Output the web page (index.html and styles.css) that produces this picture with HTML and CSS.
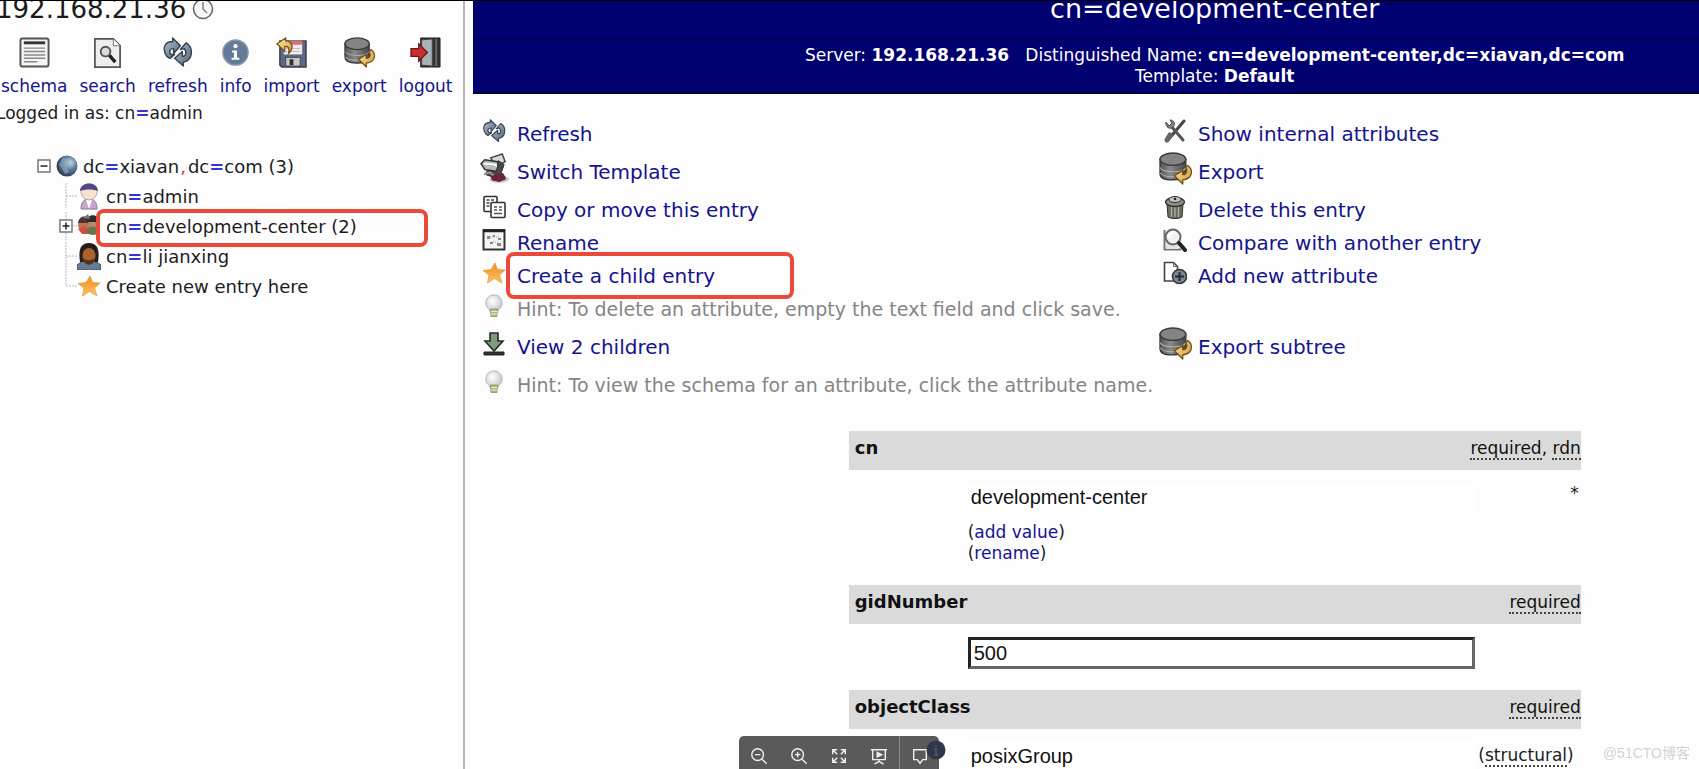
FILE: index.html
```html
<!DOCTYPE html>
<html lang="en">
<head>
<meta charset="utf-8">
<title>phpLDAPadmin</title>
<link rel="stylesheet" href="styles.css">
</head>
<body>
<svg class="defs" aria-hidden="true">
  <defs>
    <linearGradient id="steel" x1="0" y1="0" x2="1" y2="1"><stop offset="0" stop-color="#b4c1cd"/><stop offset="1" stop-color="#526478"/></linearGradient>
    <linearGradient id="drum" x1="0" x2="1"><stop offset="0" stop-color="#555"/><stop offset=".4" stop-color="#8a8a8a"/><stop offset="1" stop-color="#484848"/></linearGradient>
    <linearGradient id="gold" x1="0" y1="0" x2="1" y2="1"><stop offset="0" stop-color="#fff0a8"/><stop offset="1" stop-color="#c89430"/></linearGradient>
    <linearGradient id="sun" x1="0" y1="0" x2="0" y2="1"><stop offset="0" stop-color="#f08c20"/><stop offset="1" stop-color="#ffc45e"/></linearGradient>
    <radialGradient id="ball" cx=".65" cy=".35" r=".8"><stop offset="0" stop-color="#c8dcec"/><stop offset=".4" stop-color="#5f7c9c"/><stop offset="1" stop-color="#1b2638"/></radialGradient>
    <radialGradient id="glass" cx=".4" cy=".35" r=".7"><stop offset="0" stop-color="#fff"/><stop offset="1" stop-color="#c2c2cc"/></radialGradient>
    <symbol id="i-refresh" viewBox="0 0 32 32">
      <path d="M5 20C-1 11 4 4 11 5V1l8 8-7 8v-5c-4 0-5 3-3 6h4l-5 4z" fill="url(#steel)" stroke="#344252" stroke-width="1.500" stroke-linejoin="round"/>
      <path d="M25 6c8 5 7 18-3 20v4l-9-8 8-7v5c4 0 5-5 2-8l-4 1z" fill="url(#steel)" stroke="#344252" stroke-width="1.500" stroke-linejoin="round"/>
    </symbol>
    <symbol id="i-export" viewBox="0 0 32 32">
      <path d="M1 7v14c0 4 5 6 12 6s13-2 13-6V7z" fill="url(#drum)" stroke="#333" stroke-width="1.300"/>
      <ellipse cx="13.500" cy="7" rx="12.500" ry="6" fill="#848484" stroke="#3b3b3b" stroke-width="1.300"/>
      <path d="M1 15c2 5 23 6 25 0M1 20c2 4 13 5 17 3" fill="none" stroke="#b0b0b0"/>
      <path d="M28 13c6 5 4 13-5 14v4l-8-8 8-5v4c4 0 5-4 3-7z" fill="url(#gold)" stroke="#765018" stroke-width="1.300" stroke-linejoin="round"/>
    </symbol>
    <symbol id="i-star" viewBox="0 0 24 24">
      <path d="M13 2l2.500 6.500 7.500.5-5.500 5 2.500 8-7.500-4.500L5.500 22l1.500-8L1 9.500l8-1z" fill="url(#sun)" stroke="#df9f48" stroke-width=".8"/>
    </symbol>
    <symbol id="i-bulb" viewBox="0 0 24 24">
      <path d="M12 1a8 8 0 0 0-5 14.300L8.500 18h7l1.500-2.700A8 8 0 0 0 12 1z" fill="url(#glass)" stroke="#b4b4b9"/>
      <path d="M8.500 15h7l-.5 7.500H9z" fill="#b5ba82" stroke="#888c66" stroke-width=".8"/>
      <path d="M9 17.500h6.500M9 20h6.500" stroke="#e9ecc8"/>
    </symbol>
  </defs>
</svg>

<div class="page">
  <aside class="sidebar">
    <div class="server">
      <h1 class="server-name">192.168.21.36</h1>
      <svg class="clock" viewBox="0 0 22 22"><circle cx="11" cy="11" r="9.500" fill="#f7f7f7" stroke="#6a6a6a" stroke-width="1.600"/><path d="M11 4v7l4 4" fill="none" stroke="#777" stroke-width="1.400"/></svg>
    </div>
    <nav class="tools">
      <a class="tool" href="#"><svg class="icon-lg" viewBox="0 0 32 32"><rect x="1.500" y="1.500" width="29" height="29" rx="2" fill="#f4f4f4" stroke="#555" stroke-width="2"/><path d="M5 6h22" stroke="#33333d" stroke-width="3"/><path d="M5 11.500h22M5 15h22M5 18.500h22M5 22h22M5 25.500h14" stroke="#888" stroke-width="1.500"/></svg>schema</a>
      <a class="tool" href="#"><svg class="icon-lg" viewBox="0 0 32 32"><path d="M3 2h19l7 7v22H3z" fill="#eee" stroke="#555" stroke-width="1.800"/><path d="M22 2v7h7" fill="#fff" stroke="#777"/><circle cx="14" cy="15" r="5" fill="#d4dce2" stroke="#555" stroke-width="2"/><path d="M18 19l6 7" stroke="#222" stroke-width="3.500"/></svg>search</a>
      <a class="tool" href="#"><svg class="icon-lg"><use href="#i-refresh"/></svg>refresh</a>
      <a class="tool" href="#"><svg class="icon-lg" viewBox="0 0 32 32"><circle cx="16" cy="16" r="13" fill="#647b98" stroke="#8a98ab" stroke-width="1.500"/><circle cx="16" cy="9.500" r="2.200" fill="#fff"/><path d="M12.500 14h5v7.500h2.500v2h-8v-2h2.500V16h-2z" fill="#fff"/></svg>info</a>
      <a class="tool" href="#"><svg class="icon-lg" viewBox="0 0 32 32"><path d="M4 4h27v27H6l-2-2z" fill="#5d6787" stroke="#3a3d4c" stroke-width="1.500"/><path d="M8 4h19v14H8z" fill="#f3efef"/><path d="M8 4h19v4H8z" fill="#d67272"/><path d="M10 12h15M10 15h15" stroke="#bbb"/><path d="M10 21h15v9H10z" fill="#c5c7cb" stroke="#444"/><path d="M14 23h4v6h-4z" fill="#333"/><path d="M10 1L1 7l8 8v-5c4-1 5 2 4 7 6-5 4-13-3-13z" fill="url(#gold)" stroke="#74501e" stroke-width="1.300"/></svg>import</a>
      <a class="tool" href="#"><svg class="icon-lg"><use href="#i-export"/></svg>export</a>
      <a class="tool" href="#"><svg class="icon-lg" viewBox="0 0 32 32"><path d="M11 1h20v30H11z" fill="#343434" stroke="#222"/><path d="M12 3l11-1v28l-11-1z" fill="#a8b3b5" stroke="#444"/><path d="M27 2v28" stroke="#666" stroke-width="2"/><path d="M1 12h8V7l9 9-9 9v-5H1z" fill="#c93030" stroke="#701515" stroke-width="1.300"/></svg>logout</a>
    </nav>
    <p class="login">Logged in as: cn<b class="eq">=</b>admin</p>

    <ul class="tree">
      <li class="node root">
        <svg class="toggle" viewBox="0 0 14 14"><path d="M1 1h12v12H1z" fill="#fff" stroke="#777" stroke-width="1.500"/><path d="M3.500 7h7" stroke="#222" stroke-width="1.500"/></svg>
        <svg class="icon-md" viewBox="0 0 24 24"><circle cx="12" cy="12" r="10.500" fill="url(#ball)"/><path d="M8 4l6 1 2 4-4 4 2 5-4 2-4-7-2-2z" fill="#9fb3c6" opacity=".55"/></svg>
        <a class="label" href="#">dc<b class="eq">=</b>xiavan<span class="comma">,</span>dc<b class="eq">=</b>com (3)</a>
      </li>
      <li class="node child">
        <svg class="branch" viewBox="0 0 18 30"><path d="M7 2v25M7 15h11" fill="none" stroke="#b9b4c8" stroke-dasharray="2 1"/></svg>
        <svg class="icon-person" viewBox="0 0 24 28"><path d="M4 27c0-7 3-10 8-10s8 3 8 10z" fill="#c9a6cf" stroke="#87758f"/><path d="M9 18l3 9 3-9z" fill="#fff"/><circle cx="12" cy="10" r="8" fill="#f7e0d0" stroke="#b79b97" stroke-width=".8"/><path d="M3 9c0-10 18-10 18 0-5-2-12-2-18 0z" fill="#514882"/></svg>
        <a class="label" href="#">cn<b class="eq">=</b>admin</a>
      </li>
      <li class="node child">
        <svg class="branch" viewBox="0 0 18 30"><path d="M7 1v28M14 15h4" fill="none" stroke="#b9b4c8" stroke-dasharray="2 1"/><path d="M1 9h12v12H1z" fill="#fff" stroke="#777" stroke-width="1.500"/><path d="M3.500 15h7M7 11.500v7" stroke="#222" stroke-width="1.500"/></svg>
        <svg class="icon-person" viewBox="0 0 24 28"><circle cx="7" cy="13" r="6" fill="#c0705a"/><path d="M1 11c1-8 10-9 12 0z" fill="#4d342e"/><circle cx="17" cy="12" r="6" fill="#b48868"/><path d="M10 10C9 1 22 1 23 10z" fill="#2e2a28"/><path d="M1 17l7-3 6 8H5z" fill="#d64b40"/><path d="M9 20c0-7 13-7 14 0-4 4-10 4-14 0z" fill="#6d744c"/><path d="M6 6l5-4 2 5z" fill="#777"/></svg>
        <a class="label" href="#">cn<b class="eq">=</b>development-center (2)<span class="marker"></span></a>
      </li>
      <li class="node child">
        <svg class="branch" viewBox="0 0 18 30"><path d="M7 1v28M7 15h11" fill="none" stroke="#b9b4c8" stroke-dasharray="2 1"/></svg>
        <svg class="icon-person" viewBox="0 0 24 28"><path d="M0 28v-5l6-4h12l6 4v5z" fill="#667c96" stroke="#3e4b5c"/><path d="M3 20C1 7 4 1 12 1s11 6 9 19z" fill="#261d1a"/><ellipse cx="12" cy="14" rx="6.500" ry="8" fill="#a9632f"/><path d="M6 16c4 3 8 3 12 0 0 9-12 9-12 0z" fill="#57321d"/></svg>
        <a class="label" href="#">cn<b class="eq">=</b>li jianxing</a>
      </li>
      <li class="node child">
        <svg class="branch" viewBox="0 0 18 30"><path d="M7 0v15h11" fill="none" stroke="#b9b4c8" stroke-dasharray="2 1"/></svg>
        <svg class="icon-md"><use href="#i-star"/></svg>
        <a class="label" href="#">Create new entry here</a>
      </li>
    </ul>
  </aside>

  <main class="main">
    <div class="content">
      <header class="head">
        <h2 class="title">cn=development-center</h2>
        <div class="subtitle">
          <p>Server: <b>192.168.21.36</b> &nbsp; Distinguished Name: <b>cn=development-center,dc=xiavan,dc=com</b></p>
          <p>Template: <b>Default</b></p>
        </div>
      </header>

      <div class="actions">
        <div class="row tall">
          <div class="action"><span class="slot"><svg class="icon-md"><use href="#i-refresh"/></svg></span><a href="#">Refresh</a></div>
          <div class="action"><span class="slot"><svg class="icon-md" viewBox="0 0 24 24"><path d="M21 2L5 21" stroke="#444" stroke-width="3" stroke-linecap="round"/><path d="M4 21l3-5" stroke="#666" stroke-width="5" stroke-linecap="round"/><path d="M8 7l12 14" stroke="#555" stroke-width="3" stroke-linecap="round"/><path d="M3 3l3 4 3-3-2-3c4 0 6 4 3 7S2 8 3 3z" fill="#888" stroke="#444"/></svg></span><a href="#">Show internal attributes</a></div>
        </div>
        <div class="row tall">
          <div class="action"><span class="slot"><svg class="icon-lg" viewBox="0 0 32 32"><ellipse cx="21" cy="27" rx="10" ry="4" fill="#ccc"/><path d="M12 5l12-4 3 8-9 5z" fill="#d9d9d5" stroke="#444" stroke-width="1.500"/><path d="M2 11l4-4 13 2 3 6-4 4-12-2z" fill="#b9b9b6" stroke="#333" stroke-width="1.500"/><path d="M5 11l12 1 2 3" fill="none" stroke="#fff" stroke-width="2"/><path d="M20 8l6 4-3 8 4 5-9 1-12-4 3-4 9 1z" fill="#494949" stroke="#2c2c2c"/><path d="M12 23l13-2 3 6-7 3-8-2z" fill="#6d2437"/><path d="M5 22l6-2 4 3" fill="none" stroke="#999" stroke-width="2"/></svg></span><a href="#">Switch Template</a></div>
          <div class="action"><span class="slot"><svg class="icon-xl"><use href="#i-export"/></svg></span><a href="#">Export</a></div>
        </div>
        <div class="row">
          <div class="action"><span class="slot"><svg class="icon-md" viewBox="0 0 24 24"><rect x="2" y="1.500" width="13" height="15" rx="1" fill="#fff" stroke="#333" stroke-width="1.600"/><path d="M4.500 5h3M9 5h3M4.500 8h3M4.500 11h3" stroke="#444" stroke-width="1.500"/><rect x="9" y="7.500" width="14" height="15" rx="1" fill="#fff" stroke="#333" stroke-width="1.600"/><path d="M12 12h3M17 12h3M12 15h3M17 15h3M12 18.500h8" stroke="#555" stroke-width="1.500"/></svg></span><a href="#">Copy or move this entry</a></div>
          <div class="action"><span class="slot"><svg class="icon-md" viewBox="0 0 24 24"><path d="M4 9h16l-1 13c-3 2-11 2-14 0z" fill="#6a6a61" stroke="#33332e"/><path d="M8.500 11v11M12 11v11M15.500 11v11" stroke="#b4b4a6" stroke-width="1.200"/><ellipse cx="12" cy="7" rx="9.500" ry="4.500" fill="#8e8e85" stroke="#2c2c28" stroke-width="1.300"/><ellipse cx="12" cy="4.500" rx="6" ry="3" fill="#c6c6bc" stroke="#2c2c28"/><circle cx="12" cy="4" r="1.300" fill="#222"/></svg></span><a href="#">Delete this entry</a></div>
        </div>
        <div class="row">
          <div class="action"><span class="slot"><svg class="icon-md" viewBox="0 0 24 24"><rect x="1.500" y="2" width="21" height="19.500" fill="#f5f5f5" stroke="#333" stroke-width="2"/><path d="M1 3h22" stroke="#222" stroke-width="2.500"/><path d="M5 8h3v3H5zM11 7h2v2h-2zM16 10h3v2h-3zM8 14h3v2H8zM15 15h4v3h-4z" fill="#888"/><path d="M8 9h9M11 14h6" stroke="#999" stroke-dasharray="1 1"/></svg></span><a href="#">Rename</a></div>
          <div class="action"><span class="slot"><svg class="icon-md" viewBox="0 0 24 24"><path d="M1.500 2v19.500h17" fill="none" stroke="#777" stroke-width="2"/><path d="M3 12h12v9H3z" fill="#e4e4e4"/><circle cx="10" cy="9" r="7.500" fill="#eef2f2" stroke="#666" stroke-width="2"/><path d="M6 9c0-3 2-4 4-4" fill="none" stroke="#fff" stroke-width="2"/><path d="M16 15l6 7" stroke="#222" stroke-width="4" stroke-linecap="round"/></svg></span><a href="#">Compare with another entry</a></div>
        </div>
        <div class="row">
          <div class="action"><span class="slot"><svg class="icon-md"><use href="#i-star"/></svg></span><a class="marked" href="#">Create a child entry<span class="marker"></span></a></div>
          <div class="action"><span class="slot"><svg class="icon-md" viewBox="0 0 24 24"><path d="M1.500 1.500h9l4 4V20h-13z" fill="#fff" stroke="#444" stroke-width="1.600"/><path d="M10.500 1.500v4h4" fill="none" stroke="#666"/><circle cx="16.500" cy="15.500" r="7" fill="#81868e" stroke="#33363c" stroke-width="1.600"/><path d="M16.500 11v9M12 15.500h9" stroke="#202838" stroke-width="2"/></svg></span><a href="#">Add new attribute</a></div>
        </div>
        <div class="row tall">
          <div class="action hint"><span class="slot"><svg class="icon-md"><use href="#i-bulb"/></svg></span><span>Hint: To delete an attribute, empty the text field and click save.</span></div>
        </div>
        <div class="row tall">
          <div class="action"><span class="slot"><svg class="icon-md" viewBox="0 0 24 24"><path d="M8 1h8v8h5l-9 10-9-10h5z" fill="#7f9a7d" stroke="#252f25" stroke-width="1.600"/><path d="M2 20h20v3H2z" fill="#2b332b" stroke="#222"/></svg></span><a href="#">View 2 children</a></div>
          <div class="action"><span class="slot"><svg class="icon-xl"><use href="#i-export"/></svg></span><a href="#">Export subtree</a></div>
        </div>
        <div class="row">
          <div class="action hint"><span class="slot"><svg class="icon-md"><use href="#i-bulb"/></svg></span><span>Hint: To view the schema for an attribute, click the attribute name.</span></div>
        </div>
      </div>

      <form class="entry">
        <div class="bar"><label for="cn">cn</label><span class="notes"><abbr>required</abbr>, <abbr>rdn</abbr></span></div>
        <div class="field">
          <div class="value">
            <input class="text plain" id="cn" type="text" value="development-center" readonly>
            <div class="links">(<a href="#">add value</a>)<br>(<a href="#">rename</a>)</div>
          </div>
          <span class="side">*</span>
        </div>
        <div class="bar"><label for="gid">gidNumber</label><span class="notes"><abbr>required</abbr></span></div>
        <div class="field">
          <div class="value"><input class="text boxed" id="gid" type="text" value="500"></div>
        </div>
        <div class="bar"><label for="oc">objectClass</label><span class="notes"><abbr>required</abbr></span></div>
        <div class="field">
          <div class="value"><input class="text plain" id="oc" type="text" value="posixGroup" readonly></div>
          <span class="side kind">(<abbr>structural</abbr>)</span>
        </div>
      </form>
    </div>
  </main>
</div>

<div class="viewer">
  <button class="vbtn" type="button" aria-label="Zoom out"><svg class="vicon" viewBox="0 0 20 20"><circle cx="8.500" cy="8.500" r="6.500"/><path d="M13.500 13.500l5 5M5.500 8.500h6"/></svg></button>
  <button class="vbtn" type="button" aria-label="Zoom in"><svg class="vicon" viewBox="0 0 20 20"><circle cx="8.500" cy="8.500" r="6.500"/><path d="M13.500 13.500l5 5M5.500 8.500h6M8.500 5.500v6"/></svg></button>
  <button class="vbtn" type="button" aria-label="Full screen"><svg class="vicon" viewBox="0 0 20 20"><path d="M3 8V3h5M12 3h5v5M17 12v5h-5M8 17H3v-5M3 3l5 5M17 3l-5 5M17 17l-5-5M3 17l5-5"/></svg></button>
  <button class="vbtn" type="button" aria-label="Present"><svg class="vicon" viewBox="0 0 20 20"><path d="M1 3h18M3 3v11h14V3M10 14v2M5 19l5-3 5 3"/><path d="M8 6l5 2.500L8 11z" fill="#eee"/></svg></button>
  <button class="vbtn last" type="button" aria-label="Comment"><svg class="vicon" viewBox="0 0 20 20"><path d="M3 3h14v11h-4l-3 4-3-4H3z"/></svg><svg class="badge" viewBox="0 0 20 20"><circle cx="10" cy="10" r="9.500" fill="#2f374a"/><path d="M10 5v2M8 9h2v6M8 15h4" fill="none" stroke="#4d5a76" stroke-width="1.500"/></svg></button>
</div>
<span class="watermark">@51CTO博客</span>
</body>
</html>
```
FILE: styles.css
```css
* {
  box-sizing: border-box;
}

body {
  margin: 0;
  height: 100vh;
  overflow: hidden;
  border-top: 1px solid #000;
  background: #fdfdfd;
  color: #1c1c1c;
  font-family: "DejaVu Sans", Verdana, sans-serif;
  font-size: 17px;
}

a {
  color: #14148c;
  text-decoration: none;
}

h1,
h2,
p,
ul {
  margin: 0;
  padding: 0;
  font-weight: normal;
}

.defs {
  position: absolute;
  width: 0;
  height: 0;
}

.page {
  display: flex;
  height: 100%;
}

.icon-md {
  width: 24px;
  height: 24px;
  flex: none;
}

.icon-person {
  width: 24px;
  height: 28px;
  flex: none;
}

.icon-lg {
  width: 31px;
  height: 31px;
  flex: none;
}

.icon-xl {
  width: 33px;
  height: 33px;
  flex: none;
}

/* Sidebar */

.sidebar {
  flex: none;
  width: 465px;
  overflow: hidden;
  border-right: 2px solid #b4b4ba;
}

.server {
  display: flex;
  align-items: center;
  gap: 6px;
  height: 32px;
  margin: -8px 0 0 -4px;
}

.server-name {
  font-size: 26px;
  line-height: 32px;
}

.clock {
  width: 22px;
  height: 22px;
}

.tools {
  display: flex;
  gap: 12px;
  padding: 12px 0 0 1px;
}

.tool {
  display: flex;
  flex-direction: column;
  align-items: center;
  gap: 7px;
  line-height: 22px;
}

.login {
  margin: 5px 0 0 -4px;
  line-height: 22px;
}

.eq {
  color: #3434d8;
}

.comma {
  padding: 0 2px 0 1px;
  color: #e0304c;
}

.tree {
  padding: 27px 0 0 37px;
  list-style: none;
  font-size: 18px;
}

.node {
  display: flex;
  align-items: center;
  height: 30px;
}

.root {
  gap: 4px;
}

.child {
  padding-left: 22px;
}

.child .label {
  padding-left: 5px;
}

.label {
  position: relative;
  color: #1c1c1c;
}

.toggle {
  width: 14px;
  height: 14px;
}

.branch {
  width: 18px;
  height: 30px;
}

.marker {
  position: absolute;
  inset: -7px -71px -10px -5px;
  border: 4px solid #ea4a3a;
  border-radius: 8px;
}

/* Main pane */

.main {
  flex: 1;
  min-width: 0;
  overflow: hidden;
  padding-left: 8px;
}

.content {
  width: 121%;
}

.head {
  height: 93px;
  border-bottom: 2px solid #00003c;
  background: #000070;
  color: #fff;
  text-align: center;
}

.title {
  height: 39px;
  border-bottom: 2px solid #000054;
  font-size: 27px;
  line-height: 16px;
}

.subtitle {
  padding-top: 5px;
  line-height: 21px;
}

.actions {
  padding: 28px 0 0 3px;
  font-size: 20px;
  line-height: 24px;
}

.row {
  display: grid;
  grid-template-columns: 46% 1fr;
  height: 33px;
}

.tall {
  height: 38px;
}

.action {
  display: flex;
  align-items: flex-start;
  gap: 5px;
  white-space: nowrap;
}

.slot {
  display: flex;
  flex: none;
  align-items: center;
  justify-content: center;
  width: 36px;
  height: 17px;
}

.hint {
  color: #858585;
  font-size: 19px;
}

.marked {
  position: relative;
}

.marked .marker {
  inset: -12px -79px -11px -11px;
}

/* Entry form */

.entry {
  width: 732px;
  margin: 25px auto 0;
}

.bar {
  display: flex;
  justify-content: space-between;
  height: 39px;
  padding-left: 6px;
  background: #dadada;
  color: #111;
  line-height: 34px;
}

.bar label {
  font-size: 18px;
  font-weight: bold;
}

abbr {
  border-bottom: 2px dotted #444;
  text-decoration: none;
}

.field {
  display: flex;
  justify-content: space-between;
  padding: 13px 0 21px 119px;
  line-height: 21px;
}

.value {
  width: 507px;
}

.text {
  display: block;
  width: 100%;
  height: 32px;
  padding: 0 3px;
  border: 0;
  background: #fff;
  color: #111;
  font-family: "Liberation Sans", Arial, sans-serif;
  font-size: 20px;
}

.plain {
  height: 28px;
}

.boxed {
  border: 3px solid;
  border-color: #222 #666 #666 #222;
}

.links {
  padding: 11px 0 0;
}

.side {
  padding-right: 2px;
}

.kind {
  padding: 3px 7px 0 0;
}

/* Viewer toolbar */

.viewer {
  position: fixed;
  left: 43.5%;
  bottom: 0;
  display: flex;
  height: 33px;
  border-radius: 5px 5px 0 0;
  background: #5a5a5a;
}

.vbtn {
  position: relative;
  width: 40px;
  padding: 4px 0 0;
  border: 0;
  background: none;
}

.last {
  border-left: 1px solid #8a8a8a;
}

.vicon {
  display: block;
  width: 18px;
  height: 18px;
  margin: 2px auto 0;
  fill: none;
  stroke: #eee;
  stroke-width: 1.6;
}

.badge {
  position: absolute;
  top: 4px;
  right: -7px;
  width: 20px;
  height: 20px;
}

.watermark {
  position: fixed;
  right: 9px;
  bottom: 7px;
  color: #d2d2d2;
  font-family: "Liberation Sans", "Noto Sans CJK SC", sans-serif;
  font-size: 14px;
}
```
